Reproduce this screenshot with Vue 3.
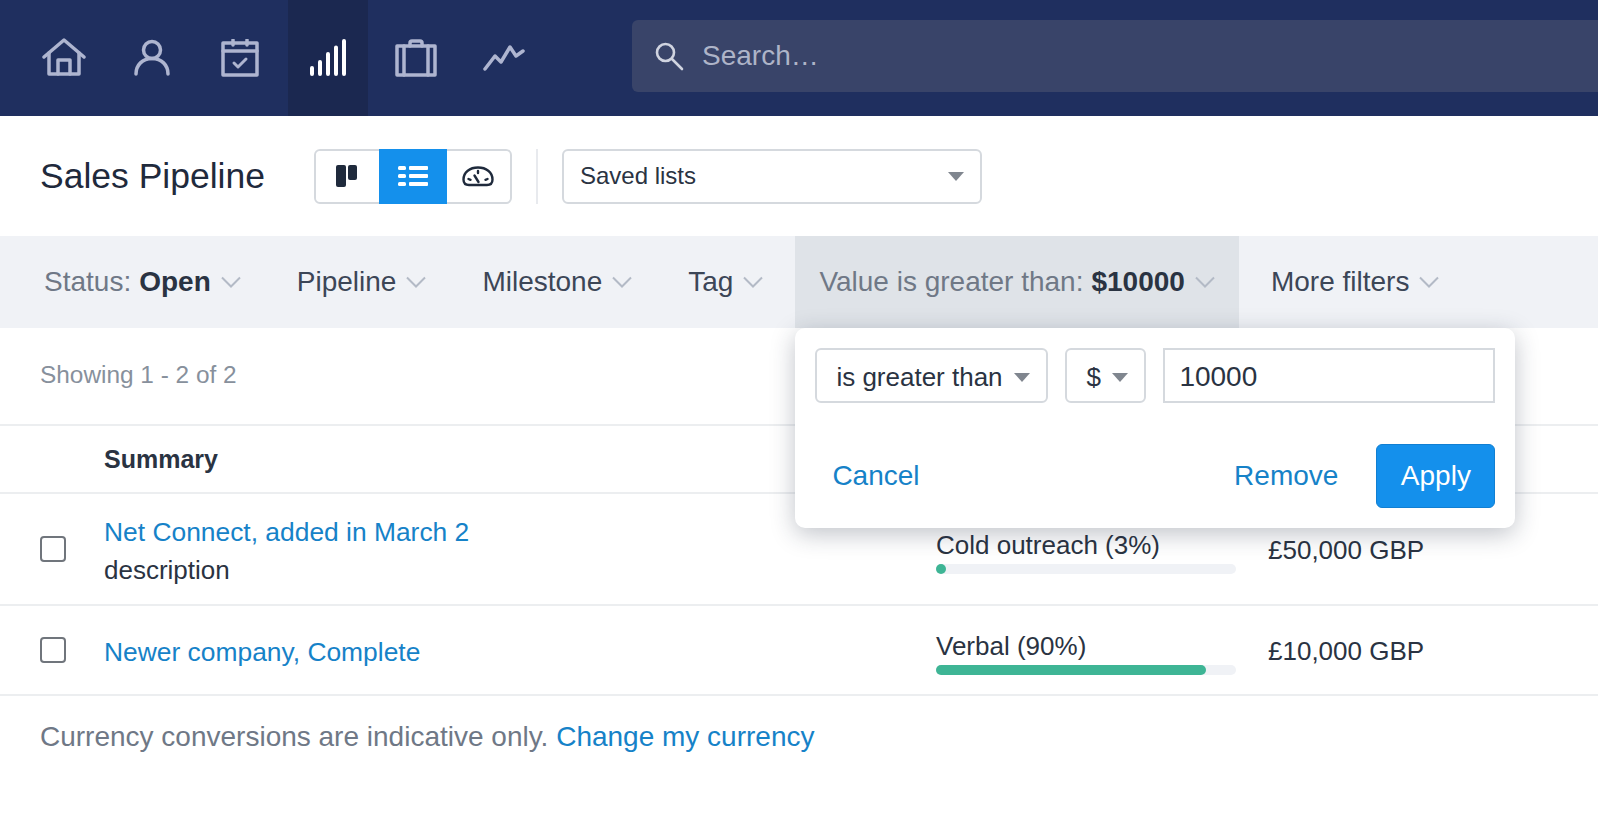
<script setup>
const navItems = [
  { name: 'home' },
  { name: 'person' },
  { name: 'calendar' },
  { name: 'bars', active: true },
  { name: 'case' },
  { name: 'trend' }
]

const filters = [
  { label: 'Status:', value: 'Open', muted: true },
  { label: 'Pipeline' },
  { label: 'Milestone' },
  { label: 'Tag' },
  { label: 'Value is greater than:', value: '$10000', muted: true, open: true },
  { label: 'More filters' }
]

const deals = [
  { title: 'Net Connect, added in March 2', desc: 'description', stage: 'Cold outreach (3%)', pct: 3, min: 10, amount: '£50,000 GBP' },
  { title: 'Newer company, Complete', stage: 'Verbal (90%)', pct: 90, amount: '£10,000 GBP' }
]
</script>

<template>
  <div class="page">
    <header class="nav">
      <div class="nav-icons">
        <a v-for="item in navItems" :key="item.name" class="nav-item" :class="{ active: item.active }">
          <svg v-if="item.name === 'home'" width="44" height="40" viewBox="0 0 44 40" class="nav-svg">
            <path d="M2 19 22 2l20 17" />
            <path d="M7 15v21h30V15" />
            <path d="M16 36V22h12v14" />
          </svg>
          <svg v-else-if="item.name === 'person'" width="38" height="38" viewBox="0 0 38 38" class="nav-svg">
            <circle cx="19" cy="11" r="8.500" />
            <path d="M3 35c0-9 6.500-15.500 16-15.500S35 26 35 35" />
          </svg>
          <svg v-else-if="item.name === 'calendar'" width="38" height="38" viewBox="0 0 38 38" class="nav-svg">
            <rect x="2" y="4" width="34" height="32" />
            <path d="M2 12h34M12 1v5M26 1v5" />
            <path class="thin" d="m13 24 4 4 8-8" />
          </svg>
          <svg v-else-if="item.name === 'bars'" width="38" height="38" viewBox="0 0 38 38" class="nav-svg bars">
            <path d="M3 35V29M11 35V23M19 35V15M27 35V8.500M35 35V2" />
          </svg>
          <svg v-else-if="item.name === 'case'" width="42" height="38" viewBox="0 0 42 38" class="nav-svg">
            <rect x="2" y="7" width="38" height="29" />
            <path d="M9 7v29M33 7v29M15 7V4a2 2 0 0 1 2-2h8a2 2 0 0 1 2 2v3" />
          </svg>
          <svg v-else width="42" height="28" viewBox="0 0 42 28" class="nav-svg">
            <path d="M2 25 12 12l6 6L27 3l6 9 7-5" />
          </svg>
        </a>
      </div>
      <div class="search">
        <svg width="30" height="30" viewBox="0 0 30 30" class="search-icon">
          <circle cx="11.500" cy="11.500" r="8.500" />
          <path d="m18 18 10 10" />
        </svg>
        <span>Search…</span>
      </div>
    </header>

    <section class="title-row">
      <h1 class="title">Sales Pipeline</h1>
      <div class="view-toggle">
        <button class="toggle-btn">
          <svg width="24" height="24" viewBox="0 0 24 24">
            <rect x="1" y="1" width="10" height="22" rx="2" fill="#1f2a3c" />
            <rect x="13" y="1" width="9" height="15" rx="2" fill="#1f2a3c" />
          </svg>
        </button>
        <button class="toggle-btn on">
          <svg width="32" height="24" viewBox="0 0 32 24" fill="#fff">
            <rect x="1" y="2" width="8" height="4" rx="1.500" />
            <rect x="12" y="2" width="19" height="4" rx="1" />
            <rect x="1" y="10" width="8" height="4" rx="1.500" />
            <rect x="12" y="10" width="19" height="4" rx="1" />
            <rect x="1" y="18" width="8" height="4" rx="1.500" />
            <rect x="12" y="18" width="19" height="4" rx="1" />
          </svg>
        </button>
        <button class="toggle-btn">
          <svg width="32" height="24" viewBox="0 0 32 24" fill="none" stroke="#1f2a3c" stroke-width="2.400" stroke-linecap="round">
            <path d="M7 21h18c3.500 0 5.500-2 5.500-5.500C30.500 8 24 3.500 16 3.500S1.500 8 1.500 15.500C1.500 19 3.500 21 7 21z" />
            <path d="M16 7v2M6.500 15l2 .8M25.500 15l-2 .8M12.500 11.500l4 6.500" />
          </svg>
        </button>
      </div>
      <div class="divider"></div>
      <div class="select saved">
        <span>Saved lists</span>
        <i class="caret"></i>
      </div>
    </section>

    <nav class="filters">
      <div v-for="f in filters" :key="f.label" class="filter" :class="{ open: f.open }">
        <span :class="{ muted: f.muted }">{{ f.label }}</span>
        <b v-if="f.value">{{ f.value }}</b>
        <svg width="20" height="12" viewBox="0 0 20 12" class="chevron">
          <path d="m1 1.500 9 9 9-9" />
        </svg>

        <div v-if="f.open" class="popup">
          <div class="popup-fields">
            <div class="select op">
              <span>is greater than</span>
              <i class="caret"></i>
            </div>
            <div class="select cur">
              <span>$</span>
              <i class="caret"></i>
            </div>
            <input class="amount" value="10000" />
          </div>
          <div class="popup-actions">
            <a class="link">Cancel</a>
            <a class="link remove">Remove</a>
            <button class="apply">Apply</button>
          </div>
        </div>
      </div>
    </nav>

    <div class="showing">Showing 1 - 2 of 2</div>

    <div class="table-head">
      <span class="head-cell">Summary</span>
    </div>

    <div v-for="(deal, i) in deals" :key="deal.title" class="deal" :class="{ tall: i === 0 }">
      <div class="check-cell"><span class="check"></span></div>
      <div class="summary-cell">
        <a class="link deal-title">{{ deal.title }}</a>
        <div v-if="deal.desc" class="deal-desc">{{ deal.desc }}</div>
      </div>
      <div class="stage">
        <div class="stage-label">{{ deal.stage }}</div>
        <div class="track">
          <div class="fill" :style="{ width: deal.pct + '%', minWidth: (deal.min || 0) + 'px' }"></div>
        </div>
      </div>
      <div class="amount-cell">{{ deal.amount }}</div>
    </div>

    <p class="footnote">
      Currency conversions are indicative only.
      <a class="link">Change my currency</a>
    </p>
  </div>
</template>

<style>
html, body {
  margin: 0;
  background: #fff;
  overflow: hidden;
}
</style>

<style scoped>
.page {
  width: 1598px;
  height: 830px;
  overflow: hidden;
  font-family: "Liberation Sans", Arial, sans-serif;
  font-size: 26.400px;
  color: #2a3342;
}

.nav {
  display: flex;
  height: 116px;
  background: #1f2f5f;
}

.nav-icons {
  display: flex;
  gap: 8px;
  padding-left: 24px;
}

.nav-item {
  width: 80px;
  height: 116px;
  display: flex;
  align-items: center;
  justify-content: center;
}

.nav-item.active {
  background: #1b2850;
}

.nav-svg {
  fill: none;
  stroke: #aeb5d0;
  stroke-width: 3.500;
  stroke-linecap: round;
  stroke-linejoin: round;
}

.nav-svg .thin {
  stroke-width: 3;
}

.nav-svg.bars {
  stroke: #fff;
  stroke-width: 4;
}

.search {
  flex: 1;
  height: 72px;
  margin: 20px 0 0 88px;
  padding-left: 22px;
  display: flex;
  align-items: center;
  gap: 18px;
  background: #394469;
  border-radius: 6px 0 0 6px;
  color: #aeb4c8;
  font-size: 28px;
}

.search-icon {
  fill: none;
  stroke: #d0d4e0;
  stroke-width: 2.600;
  stroke-linecap: round;
}

.title-row {
  height: 120px;
  display: flex;
  align-items: center;
  padding-left: 40px;
}

.title {
  margin: 0 49px 0 0;
  font-size: 35.500px;
  font-weight: 400;
  color: #1f2a3c;
}

.view-toggle {
  display: flex;
  height: 55px;
  box-sizing: border-box;
  border: 2px solid #d5d9de;
  border-radius: 6px;
}

.toggle-btn {
  width: 63px;
  padding: 0;
  border: 0;
  background: #fff;
  display: flex;
  align-items: center;
  justify-content: center;
  border-radius: 5px;
}

.toggle-btn.on {
  width: 68px;
  height: 55px;
  margin-top: -2px;
  background: #1490ec;
  border-radius: 0;
}

.divider {
  width: 2px;
  height: 55px;
  margin: 0 24px;
  background: #e8eaee;
}

.select {
  box-sizing: border-box;
  height: 55px;
  display: flex;
  align-items: center;
  justify-content: space-between;
  border: 2px solid #d5d9de;
  border-radius: 6px;
  background: #fff;
  color: #2a3342;
}

.saved {
  width: 420px;
  padding: 0 16px;
  font-size: 24px;
}

.caret {
  width: 0;
  height: 0;
  border-left: 8px solid transparent;
  border-right: 8px solid transparent;
  border-top: 9px solid #80868f;
}

.filters {
  height: 92px;
  display: flex;
  gap: 8px;
  padding-left: 20px;
  background: #f0f2f6;
  color: #3c4657;
  font-size: 28px;
}

.filter {
  position: relative;
  display: flex;
  align-items: center;
  padding: 0 24px;
}

.filter.open {
  background: #dfe3e8;
}

.muted {
  color: #6f7886;
}

.filter b {
  margin-left: 8px;
  color: #2a3342;
}

.chevron {
  margin-left: 10px;
  fill: none;
  stroke: #b3bac6;
  stroke-width: 2;
}

.popup {
  position: absolute;
  top: 100%;
  left: 0;
  z-index: 5;
  box-sizing: border-box;
  width: 720px;
  height: 200px;
  padding: 20px;
  background: #fff;
  border-radius: 10px;
  box-shadow: 0 6px 24px rgba(30, 40, 60, 0.28);
}

.popup-fields {
  display: flex;
  gap: 17px;
}

.op {
  width: 233px;
  padding: 3px 16px 0 19px;
  font-size: 26px;
}

.cur {
  width: 81px;
  padding: 3px 16px 0 19px;
  font-size: 26px;
}

.amount {
  flex: 1;
  min-width: 0;
  box-sizing: border-box;
  height: 55px;
  padding: 2px 14px 0;
  border: 2px solid #d5d9de;
  font: inherit;
  color: #2a3342;
  outline: none;
}

.popup-actions {
  display: flex;
  align-items: center;
  margin-top: 41px;
  padding-left: 17px;
}

.link {
  color: #1682c8;
}

.remove {
  margin-left: auto;
  margin-right: 38px;
}

.apply {
  width: 119px;
  height: 64px;
  border: 1px solid #117fd2;
  border-radius: 6px;
  background: #1490ec;
  color: #fff;
  font: inherit;
}

.showing {
  height: 98px;
  box-sizing: border-box;
  padding: 32px 0 0 40px;
  font-size: 24.400px;
  line-height: 30px;
  color: #87909c;
  border-bottom: 2px solid #eceef0;
}

.table-head {
  height: 68px;
  box-sizing: border-box;
  display: flex;
  align-items: center;
  padding-left: 104px;
  border-bottom: 2px solid #eceef0;
}

.head-cell {
  font-size: 25px;
  font-weight: 700;
}

.deal {
  height: 90px;
  box-sizing: border-box;
  display: grid;
  grid-template-columns: 104px 832px 332px 1fr;
  align-items: center;
  border-bottom: 2px solid #eceef0;
}

.deal.tall {
  height: 112px;
}

.check-cell {
  padding-left: 40px;
}

.check {
  display: block;
  width: 26px;
  height: 26px;
  box-sizing: border-box;
  border: 2px solid #70757c;
  border-radius: 4px;
}

.summary-cell {
  margin-top: 3px;
}

.deal-title {
  display: block;
  line-height: 38px;
}

.deal-desc {
  line-height: 38px;
  font-size: 26px;
}

.stage {
  margin-top: 3px;
}

.stage-label {
  line-height: 34px;
  font-size: 26px;
}

.track {
  width: 300px;
  height: 10px;
  margin-top: 2px;
  border-radius: 5px;
  background: #f0f2f6;
}

.fill {
  height: 100%;
  border-radius: 5px;
  background: #3eb595;
}

.amount-cell {
  margin-top: 3px;
  font-size: 26px;
}

.footnote {
  margin: 0;
  padding: 24px 0 0 40px;
  line-height: 34px;
  font-size: 28px;
  color: #6f7886;
}
</style>
